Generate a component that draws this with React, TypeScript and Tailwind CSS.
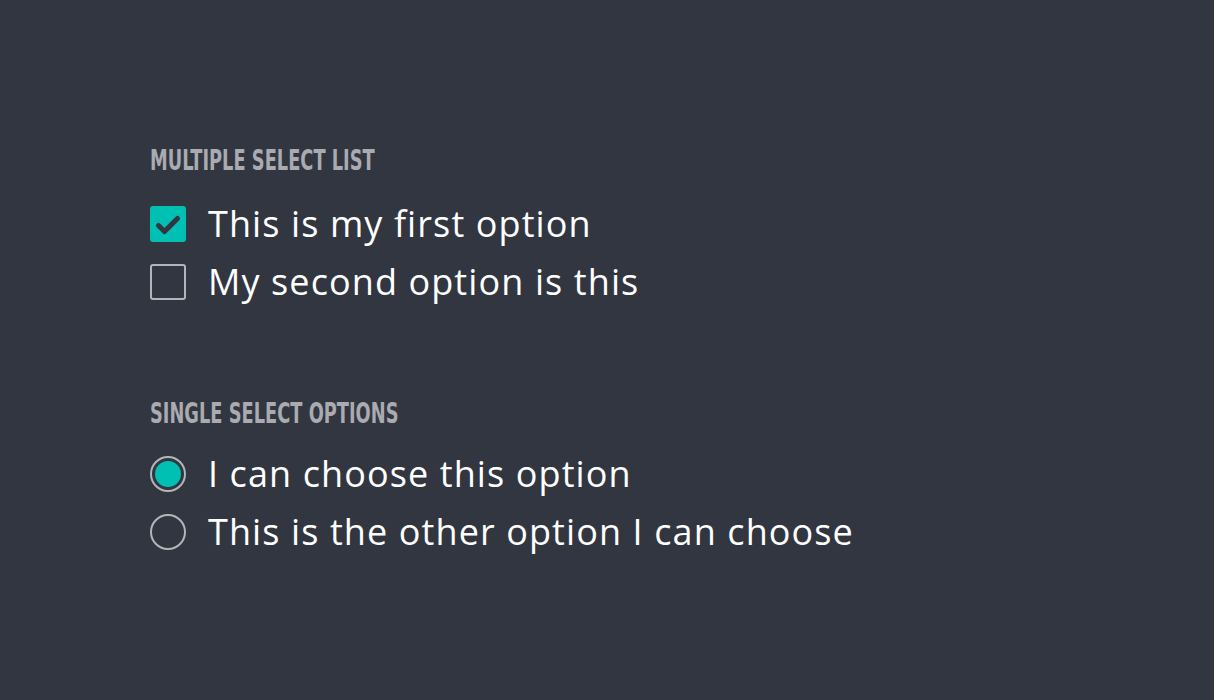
import { useState } from 'react'

function Check({ checked }: { checked: boolean }) {
  if (checked) {
    return (
      <span className="flex h-9 w-9 shrink-0 items-center justify-center rounded-[3px] bg-[#00bfb3]">
        <svg width="36" height="36" viewBox="0 0 36 36" fill="none">
          <path d="M8.5 19.5 L14.5 25.5 L27.5 12.5" stroke="#313640" strokeWidth="5" strokeLinecap="round" strokeLinejoin="round" />
        </svg>
      </span>
    )
  }
  return <span className="h-9 w-9 shrink-0 rounded-[3px] border-2 border-[#b4b5b8]" />
}

function Radio({ checked }: { checked: boolean }) {
  return (
    <span className="flex h-9 w-9 shrink-0 items-center justify-center rounded-full border-2 border-[#b4b5b8]">
      {checked && <span className="h-[26px] w-[26px] rounded-full bg-[#00bfb3]" />}
    </span>
  )
}

function Heading({ children, className = '' }: { children: string; className?: string }) {
  return (
    <h2 className={`h-[30px] ${className}`}>
      <span className="inline-block origin-left scale-x-[0.72] font-['DejaVu_Sans_Condensed','DejaVu_Sans',sans-serif] text-[27.5px] font-bold leading-[30px] text-[#a9abb0] whitespace-nowrap">
        {children}
      </span>
    </h2>
  )
}

export default function App() {
  const [multi, setMulti] = useState([true, false])
  const [single, setSingle] = useState(0)

  const checks = ['This is my first option', 'My second option is this']
  const radios = ['I can choose this option', 'This is the other option I can choose']

  return (
    <div className="h-[700px] w-full bg-[#313640] pl-[150px] pt-[145px] font-['Open_Sans',sans-serif] text-white">
      <Heading>MULTIPLE SELECT LIST</Heading>
      <div className="mt-[31px] flex flex-col gap-[22px]">
        {checks.map((label, i) => (
          <label
            key={label}
            className="flex h-9 cursor-pointer items-center gap-[22px]"
            onClick={() => setMulti(multi.map((v, j) => (j === i ? !v : v)))}
          >
            <Check checked={multi[i]} />
            <span className="text-[36px] leading-[30px] tracking-[1.1px]">{label}</span>
          </label>
        ))}
      </div>

      <Heading className="mt-[98px]">SINGLE SELECT OPTIONS</Heading>
      <div className="mt-[28px] flex flex-col gap-[22px]">
        {radios.map((label, i) => (
          <label key={label} className="flex h-9 cursor-pointer items-center gap-[22px]" onClick={() => setSingle(i)}>
            <Radio checked={single === i} />
            <span className="text-[36px] leading-[30px] tracking-[1.1px]">{label}</span>
          </label>
        ))}
      </div>
    </div>
  )
}
